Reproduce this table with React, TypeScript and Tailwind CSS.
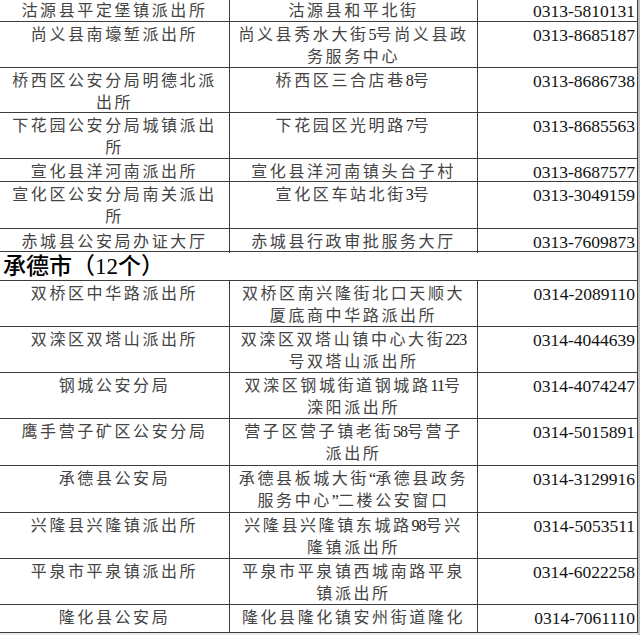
type Row = {
  name: string[]
  addr: string[]
  tel: string
  h: string
}

const top: Row[] = [
  { name: ['沽源县平定堡镇派出所'], addr: ['沽源县和平北街'], tel: '0313-5810131', h: 'h-[22px]' },
  { name: ['尚义县南壕堑派出所'], addr: ['尚义县秀水大街5号尚义县政', '务服务中心'], tel: '0313-8685187', h: 'h-[46px]' },
  { name: ['桥西区公安分局明德北派', '出所'], addr: ['桥西区三合店巷8号'], tel: '0313-8686738', h: 'h-[45px]' },
  { name: ['下花园公安分局城镇派出', '所'], addr: ['下花园区光明路7号'], tel: '0313-8685563', h: 'h-[46px]' },
  { name: ['宣化县洋河南派出所'], addr: ['宣化县洋河南镇头台子村'], tel: '0313-8687577', h: 'h-[23px]' },
  { name: ['宣化区公安分局南关派出', '所'], addr: ['宣化区车站北街3号'], tel: '0313-3049159', h: 'h-[47px]' },
  { name: ['赤城县公安局办证大厅'], addr: ['赤城县行政审批服务大厅'], tel: '0313-7609873', h: 'h-[23px]' },
]

const chengde: Row[] = [
  { name: ['双桥区中华路派出所'], addr: ['双桥区南兴隆街北口天顺大', '厦底商中华路派出所'], tel: '0314-2089110', h: 'h-[46px]' },
  { name: ['双滦区双塔山派出所'], addr: ['双滦区双塔山镇中心大街223', '号双塔山派出所'], tel: '0314-4044639', h: 'h-[46px]' },
  { name: ['钢城公安分局'], addr: ['双滦区钢城街道钢城路11号', '滦阳派出所'], tel: '0314-4074247', h: 'h-[46px]' },
  { name: ['鹰手营子矿区公安分局'], addr: ['营子区营子镇老街58号营子', '派出所'], tel: '0314-5015891', h: 'h-[47px]' },
  { name: ['承德县公安局'], addr: ['承德县板城大街“承德县政务', '服务中心”二楼公安窗口'], tel: '0314-3129916', h: 'h-[47px]' },
  { name: ['兴隆县兴隆镇派出所'], addr: ['兴隆县兴隆镇东城路98号兴', '隆镇派出所'], tel: '0314-5053511', h: 'h-[46px]' },
  { name: ['平泉市平泉镇派出所'], addr: ['平泉市平泉镇西城南路平泉', '镇派出所'], tel: '0314-6022258', h: 'h-[46px]' },
  { name: ['隆化县公安局'], addr: ['隆化县隆化镇安州街道隆化'], tel: '0314-7061110', h: 'h-[28px]' },
]

// digits and quotes sit tighter than the spaced-out CJK text
function Line({ text }: { text: string }) {
  const parts = text.split(/(\d+|[“”])/)
  return (
    <div className="whitespace-nowrap">
      {parts.map((p, i) =>
        /^(\d+|[“”])$/.test(p) ? (
          <span key={i} className="text-[16px] tracking-[-1px] text-[#222]">
            {p}
          </span>
        ) : (
          <span key={i}>{p}</span>
        )
      )}
    </div>
  )
}

function TableRow({ row, first }: { row: Row; first?: boolean }) {
  const pad = first ? 'pt-0' : 'pt-[2px]'
  return (
    <div
      className={`grid grid-cols-[230px_248px_159px] border-b border-[#3d3d3d] ${row.h}`}
    >
      <div
        className={`border-r border-[#3d3d3d] ${pad} text-center text-[16px] leading-[22px] tracking-[2.6px] text-[#444]`}
      >
        {row.name.map((l) => (
          <Line key={l} text={l} />
        ))}
      </div>
      <div
        className={`border-r border-[#3d3d3d] ${pad} text-center text-[16px] leading-[22px] tracking-[2.6px] text-[#444]`}
      >
        {row.addr.map((l) => (
          <Line key={l} text={l} />
        ))}
      </div>
      <div
        className={`${pad} pr-[2px] text-right text-[17.5px] leading-[22px] text-[#111]`}
      >
        {row.tel}
      </div>
    </div>
  )
}

export default function App() {
  return (
    <div
      className="flex h-[635px] w-[640px] overflow-hidden bg-[#ececec]"
      style={{ fontFamily: '"Liberation Serif", "Noto Sans CJK SC", serif' }}
    >
      <div className="w-[638px] self-start border-r border-[#3d3d3d] bg-white">
        {top.map((r, i) => (
          <TableRow key={r.tel} row={r} first={i === 0} />
        ))}
        <div className="h-[29px] border-b border-[#3d3d3d] pl-[3px] pt-[3px] text-[23px] leading-[24px] font-medium text-black">
          承德市（12个）
        </div>
        {chengde.map((r) => (
          <TableRow key={r.tel} row={r} />
        ))}
      </div>
      <div className="w-[2px] bg-[#bdbdbd]" />
    </div>
  )
}
